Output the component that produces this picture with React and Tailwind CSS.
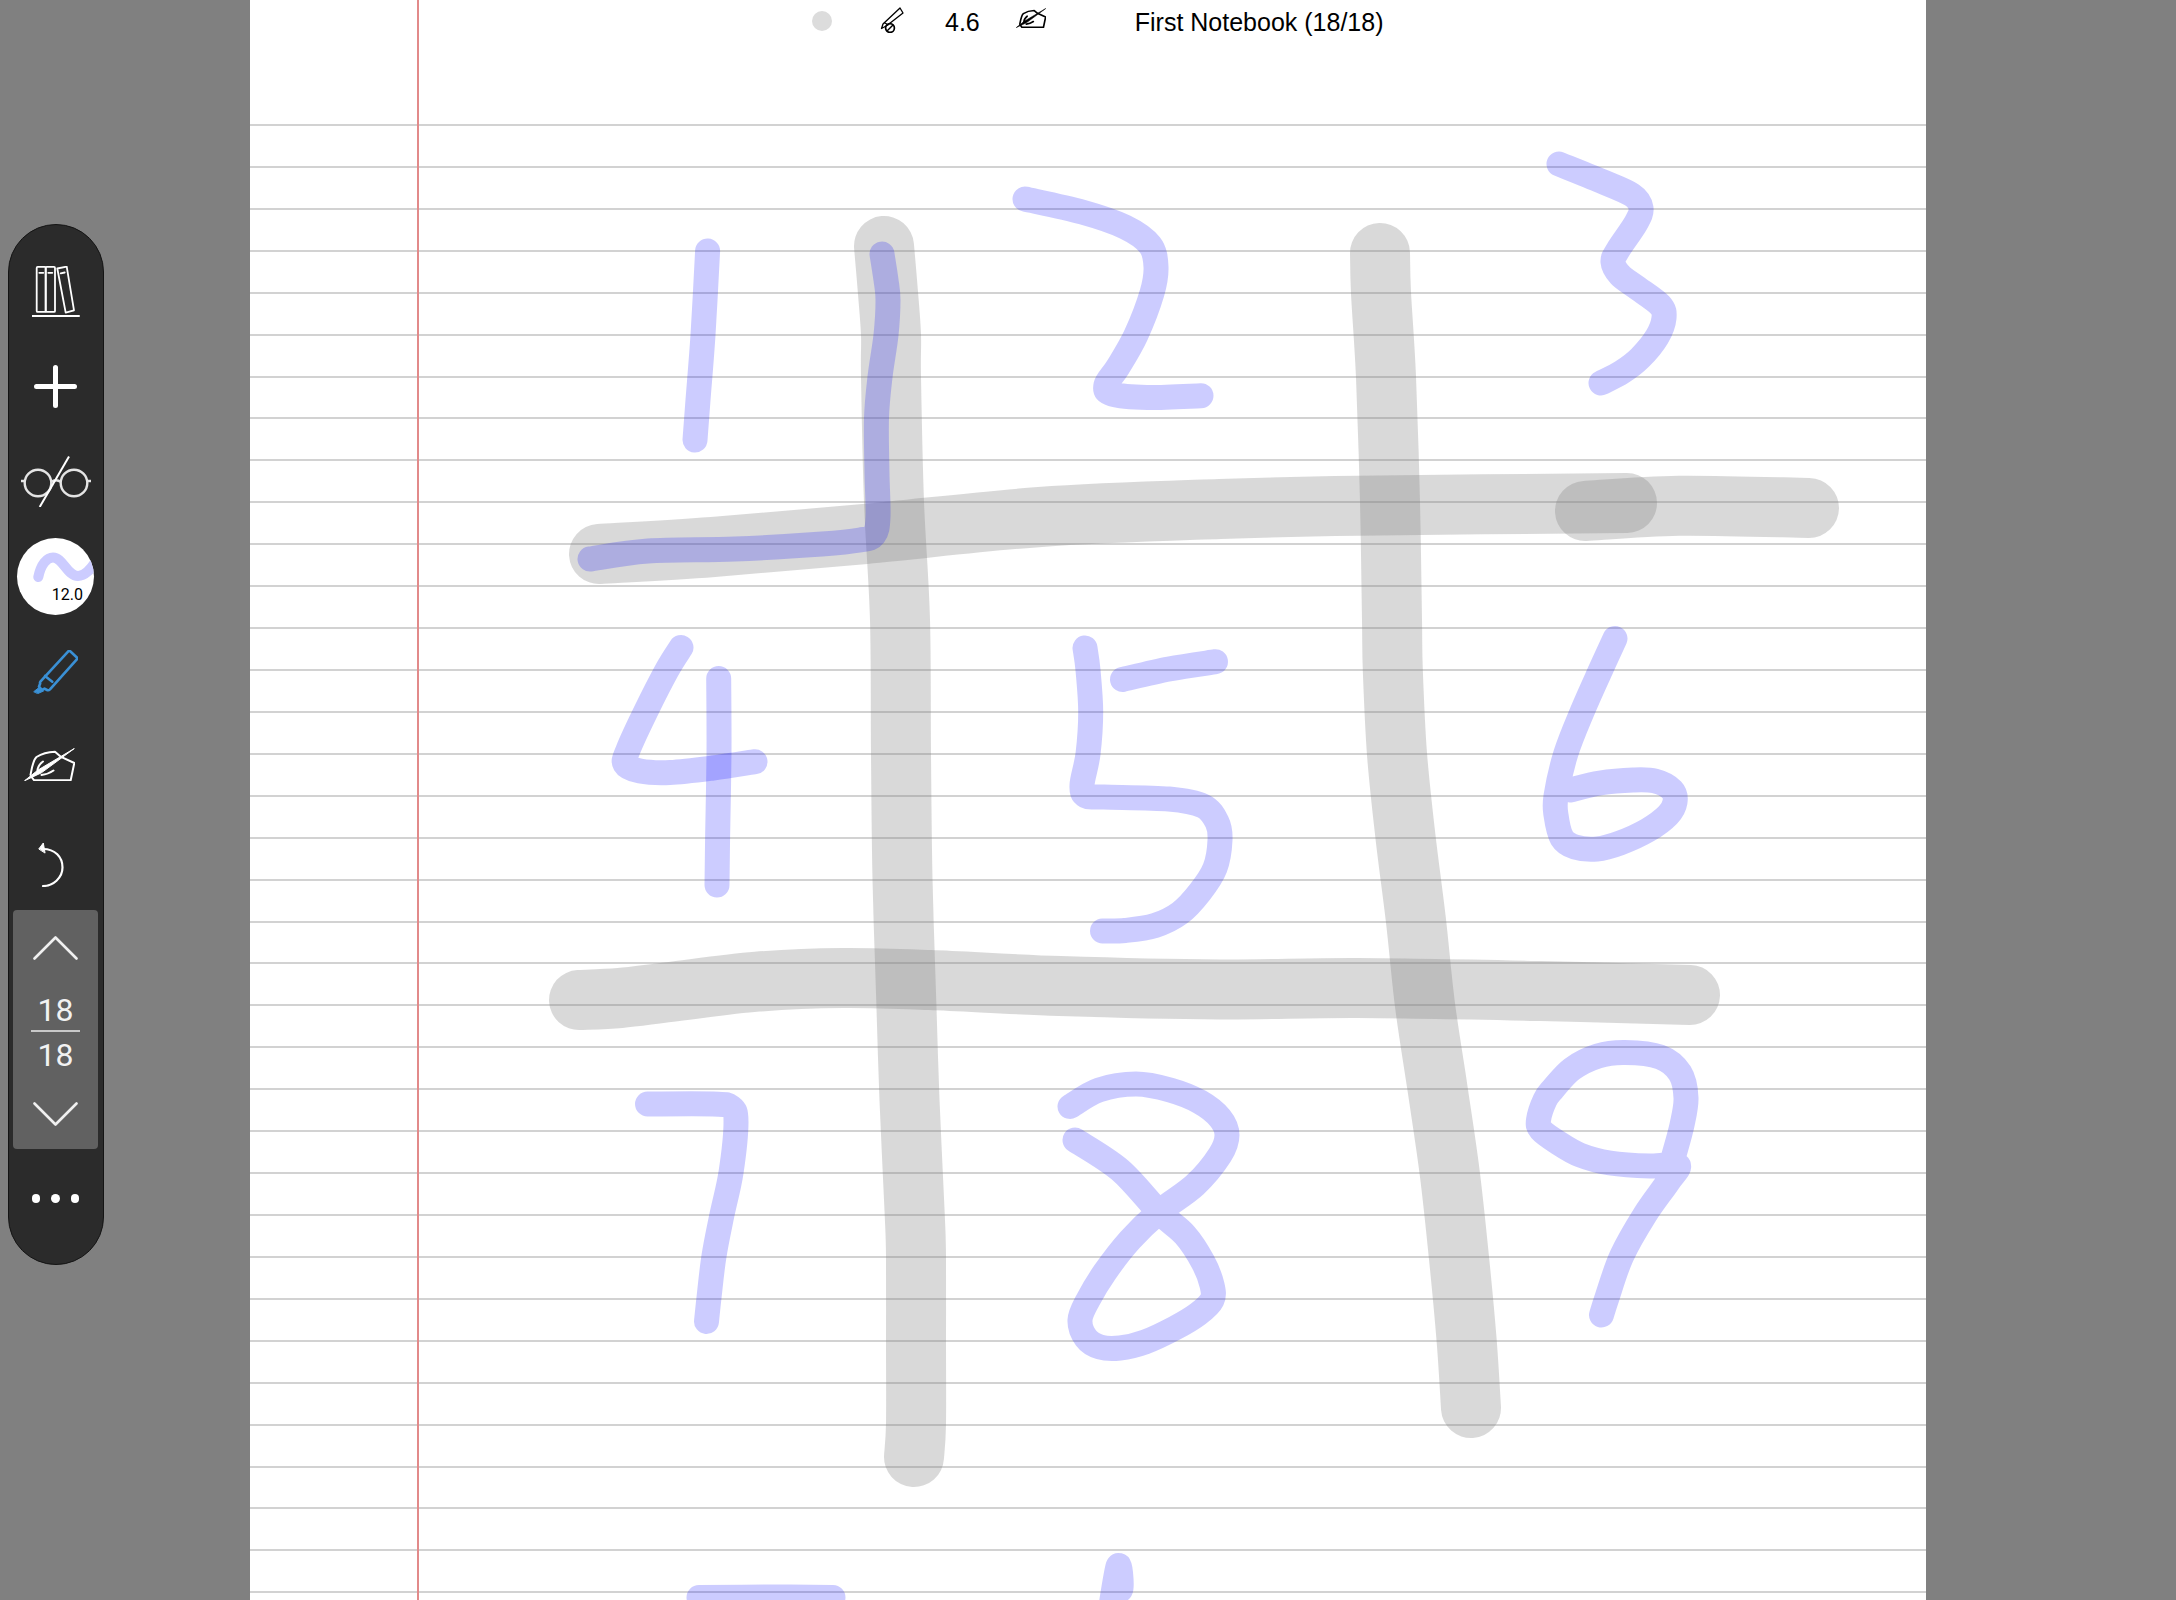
import React from "react";

const highlighterStrokes = [
  [[884, 246], [888, 293], [891, 335], [891, 377], [894, 502], [900, 620], [901, 754], [902.5, 879], [906.4, 1005], [909.5, 1100], [914.7, 1214], [916, 1256], [916, 1340], [916, 1424], [914, 1457]],
  [[1380, 253], [1381, 293], [1386, 377], [1390, 502], [1392, 620], [1392.8, 670], [1397, 754], [1405.5, 837], [1416, 921], [1425, 1005], [1437.6, 1089], [1449.6, 1172], [1458.8, 1256], [1466.6, 1340], [1471, 1408]],
  [[599, 554], [713, 547], [865, 534], [1040, 517], [1220, 509], [1358, 505.7], [1627, 503]],
  [[1585, 511], [1679, 505.7], [1809, 508]],
  [[579, 1000], [620, 998], [670, 992], [757, 981.7], [843, 978], [930, 980], [1060, 986], [1220, 989.5], [1358, 988], [1541, 991], [1690, 995]],
];

const inkStrokes = [
  [[707.6, 251], [703, 335], [698, 400], [695, 440]],
  [[882, 254], [886, 280], [888, 300], [886, 335], [880, 377], [876.5, 418], [877, 473], [878, 517], [874, 535], [860, 540], [822, 544], [735, 549], [648, 551], [590, 559]],
  [[1025, 199], [1082, 212], [1125, 227], [1150, 245], [1156, 267], [1152, 293], [1136, 335], [1118, 367], [1106, 385], [1112, 394], [1147, 397.5], [1201, 395.7]],
  [[1559, 164], [1601, 181], [1632, 195], [1641, 208], [1636, 223], [1618, 250], [1613, 262], [1620, 275], [1636, 287], [1660, 305], [1664, 318], [1657, 337], [1640, 358], [1622, 372], [1601, 383]],
  [[681, 647.5], [667, 670], [645.5, 712], [628, 750], [625, 764], [640, 771], [670, 772.5], [713, 768], [755, 761.7]],
  [[718.7, 678.5], [719, 753], [717.6, 837], [717, 885]],
  [[1085, 648], [1088, 670], [1090.7, 712], [1088, 754], [1082, 785], [1086, 796], [1104, 797], [1169, 799], [1203, 806], [1217, 822], [1220, 840], [1215, 868], [1200, 892], [1180, 913], [1155, 925.5], [1125, 930.5], [1102.5, 931]],
  [[1122.5, 679.5], [1169, 669], [1215.5, 661.7]],
  [[1615, 638.5], [1600.6, 670], [1582, 712], [1565.7, 754], [1556, 796], [1556, 815], [1562, 838], [1575, 847], [1597, 849], [1620, 843], [1648, 830], [1668, 815], [1675, 802], [1672, 790], [1655, 781], [1633, 780], [1600, 783], [1570, 790]],
  [[647.5, 1104], [713, 1104], [731, 1107], [736, 1122], [731, 1172.6], [722, 1214.6], [714, 1256], [709, 1297.6], [706.5, 1321.5]],
  [[1070, 1106.5], [1099, 1090], [1136, 1084], [1170, 1090], [1200, 1102], [1220, 1118], [1227, 1135], [1220, 1155], [1195, 1185], [1159, 1212], [1130, 1240], [1105, 1272], [1088, 1300], [1080, 1320], [1086, 1338], [1100, 1347], [1120, 1348], [1145, 1342], [1175, 1328], [1198, 1314], [1212, 1300], [1212, 1285], [1203, 1262], [1185, 1235], [1159, 1212], [1120, 1170], [1075, 1140]],
  [[1674, 1155], [1682, 1125], [1686, 1098], [1680, 1073], [1660, 1057], [1625, 1052.5], [1598, 1056], [1572, 1069], [1553, 1089], [1545, 1100], [1538.5, 1120], [1541, 1130], [1557, 1142], [1580, 1155], [1610, 1163], [1650, 1166], [1678, 1165], [1668, 1182], [1645, 1214.6], [1621.7, 1256], [1607, 1297.6], [1601.5, 1315]],
  [[699, 1597.5], [770, 1597], [833, 1597.5]],
  [[1108, 1625], [1118, 1566.5], [1121, 1588], [1114, 1592]],
];

function smoothPath(points) {
  let d = `M${points[0][0]} ${points[0][1]}`;
  for (let i = 0; i < points.length - 1; i++) {
    const p0 = points[i - 1] || points[i];
    const p1 = points[i];
    const p2 = points[i + 1];
    const p3 = points[i + 2] || p2;
    const c1x = p1[0] + (p2[0] - p0[0]) / 6;
    const c1y = p1[1] + (p2[1] - p0[1]) / 6;
    const c2x = p2[0] - (p3[0] - p1[0]) / 6;
    const c2y = p2[1] - (p3[1] - p1[1]) / 6;
    d += ` C${c1x} ${c1y} ${c2x} ${c2y} ${p2[0]} ${p2[1]}`;
  }
  return d;
}

function Strokes() {
  return (
    <svg className="absolute top-0 left-0 w-[1676px] h-[1600px]" viewBox="250 0 1676 1600" fill="none" strokeLinecap="round" strokeLinejoin="round">
      {highlighterStrokes.map((points, i) => <path key={i} d={smoothPath(points)} stroke="#808080" strokeOpacity="0.3" strokeWidth="60" />)}
      {inkStrokes.map((points, i) => <path key={i} d={smoothPath(points)} stroke="#0000ff" strokeOpacity="0.2" strokeWidth="25" />)}
    </svg>
  );
}

function BooksIcon() {
  return (
    <svg className="w-[48px] h-[52px]" viewBox="0 0 48 52" fill="none" stroke="white" strokeWidth="1.8" strokeLinejoin="round" strokeLinecap="round">
      <rect x="4.7" y="0.9" width="9" height="45" rx="1" />
      <rect x="13.7" y="0.9" width="9.3" height="45" rx="1" />
      <path d="M25.3 2.5 L34.7 0.6 L42 44.3 L33.7 46.6 Z" />
      <path d="M7.3 6.8 H11.3 M16.3 6.8 H20.3 M28.7 7.4 L32.7 6.5" />
      <path d="M0.5 50 H47" strokeWidth="2" />
    </svg>
  );
}

function PlusIcon() {
  return (
    <svg className="w-[43px] h-[43px]" viewBox="0 0 43 43" fill="none" stroke="white" strokeWidth="5" strokeLinecap="round">
      <path d="M21.5 2.5 V40.5 M2.5 21.5 H40.5" />
    </svg>
  );
}

function GlassesIcon() {
  return (
    <svg className="w-[70px] h-[51px]" viewBox="0 0 70 51" fill="none" stroke="#e4e4e4" strokeWidth="2.4">
      <circle cx="17" cy="27" r="13.3" />
      <circle cx="53" cy="27" r="13.3" />
      <path d="M0 25 H4 M66 25 H70 M30 26 Q35 22.5 40 26" />
      <path d="M48 0.5 L18.7 51" stroke="white" strokeWidth="2" />
    </svg>
  );
}

function HighlighterIcon() {
  return (
    <svg className="w-[45px] h-[44px]" viewBox="0 0 45 44" fill="none" stroke="#3a90d5" strokeWidth="2.6" strokeLinejoin="round" strokeLinecap="round">
      <path d="M35.5 1.2 Q36.5 0.6 37.5 1.5 L43.6 7.2 Q44.6 8.3 43.8 9.4 L17 39.4 Q15.5 40.8 14 40 L11.5 38.6 L9 40 L6 36.6 L7.2 33.6 Q6.6 32.6 7.6 31.4 Z" />
      <path d="M12 26 L19.3 31.7" />
      <path d="M1 41.5 L6 37.5 L10.5 41 L5 43.5 Z" fill="#3a90d5" strokeWidth="1" />
    </svg>
  );
}

function PenHandIcon({className, strokeWidth}) {
  return (
    <svg className={className} viewBox="0 0 51 33" fill="none" stroke="currentColor" strokeWidth={strokeWidth} strokeLinejoin="round" strokeLinecap="round">
      <path d="M6.5 27 C8 19 9 12 12.5 9 C18 5.5 25 4 31 3.8 L36.5 8.6 L50.3 15 L46.7 32.2 H10 L7.5 29" />
      <path d="M50 0.7 L14 22 L0.5 32.8 L17 25 Z" fill="currentColor" strokeWidth="1" />
      <path d="M13.5 23 C13.5 19 15 16.5 19 13.5 M17.5 27 C22 26.5 26 25 29.5 22.5" />
    </svg>
  );
}

function UndoIcon() {
  return (
    <svg className="w-[26px] h-[45px]" viewBox="0 0 26 45" fill="none" stroke="white" strokeWidth="2.2" strokeLinecap="round">
      <path d="M5 7 C17 7 24.5 15 24.5 25.5 C24.5 36 15 44 5 44" />
      <path d="M1 6.7 L5.3 1 L7 10.7 Z" fill="white" strokeWidth="1" strokeLinejoin="round" />
    </svg>
  );
}

function Chevron({down}) {
  return (
    <svg className="w-[45px] h-[24px]" viewBox="0 0 45 24" fill="none" stroke="#f0f0f0" strokeWidth="2.6" strokeLinecap="round" strokeLinejoin="round">
      <path d={down ? "M1.5 1.5 L22.5 22.5 L43.5 1.5" : "M1.5 22.5 L22.5 1.5 L43.5 22.5"} />
    </svg>
  );
}

function PenSlashIcon() {
  return (
    <svg className="w-[25px] h-[26px] ml-[47px]" viewBox="0 0 25 26" fill="none" stroke="black" strokeWidth="1.3" strokeLinejoin="round">
      <path d="M21 1 L24 6 L8 18.5 L2.5 21.5 L4 17 Z" />
      <path d="M5 15.5 L9.5 18" />
      <circle cx="11" cy="21" r="4.4" strokeWidth="1.7" />
      <path d="M8 24 L14 18" strokeWidth="1.4" />
    </svg>
  );
}

function Toolbar() {
  return (
    <div className="w-[96px] h-[1041px] rounded-[48px] border border-[#141414] bg-[#2b2b2b] flex flex-col items-center pt-[41px] pr-[1px]">
      <BooksIcon />
      <div className="mt-[47px]"><PlusIcon /></div>
      <div className="mt-[48px]"><GlassesIcon /></div>
      <div className="relative mt-[31px] w-[77px] h-[77px] rounded-full bg-white overflow-hidden">
        <svg className="w-[77px] h-[77px]" viewBox="0 0 77 77" fill="none">
          <path d="M21.3 39 C24 26 30 19.5 36 19.5 C46 19.5 50 38 61 38 C68 38 73 32 79 23" stroke="#ccccff" strokeWidth="10" strokeLinecap="round" />
        </svg>
        <span className="absolute right-[11px] bottom-[12px] text-[16px] leading-none text-black">12.0</span>
      </div>
      <div className="mt-[35px]"><HighlighterIcon /></div>
      <div className="mt-[54px] -ml-[13px]"><PenHandIcon className="w-[51px] h-[33px] text-white" strokeWidth="2" /></div>
      <div className="mt-[61px] -ml-[10px]"><UndoIcon /></div>
      <div className="mt-[23px] w-[85px] h-[239px] rounded-[4px] bg-[#616161] flex flex-col items-center pt-[26px] text-[32px] leading-[30px] text-[#f2f2f2]">
        <Chevron />
        <span className="mt-[35px]">18</span>
        <div className="mt-[5px] w-[49px] h-[2px] bg-[#c8c8c8]" />
        <span className="mt-[8px]">18</span>
        <div className="mt-[32px]"><Chevron down /></div>
      </div>
      <div className="mt-[45px] flex gap-[11px]">
        <div className="w-[8.5px] h-[8.5px] rounded-full bg-white" />
        <div className="w-[8.5px] h-[8.5px] rounded-full bg-white" />
        <div className="w-[8.5px] h-[8.5px] rounded-full bg-white" />
      </div>
    </div>
  );
}

function Page() {
  const rows = Array.from({length: 36}, (_, i) => i);

  return (
    <div className="relative w-[1676px] h-[1600px] overflow-hidden bg-white">
      <div className="h-[124px]">
        <div className="flex items-center h-[44px] pl-[562px] text-[25px] leading-none text-black font-['Liberation_Sans',sans-serif]">
          <div className="w-[20px] h-[20px] rounded-full bg-[#dcdcdc] -mt-[2px]" />
          <div className="-mt-[4px]"><PenSlashIcon /></div>
          <span className="ml-[41px]">4.6</span>
          <PenHandIcon className="w-[30px] h-[20px] ml-[36px] -mt-[8px] text-black" strokeWidth="2.8" />
          <span className="ml-[89px]">First Notebook (18/18)</span>
        </div>
      </div>
      {rows.map((i) => <div key={i} className="h-[41.93px] border-t-2 border-[#d2d2d2]" />)}
      <div className="absolute top-0 bottom-0 left-[167px] w-[2px] bg-[#e28a8a]" />
      <Strokes />
    </div>
  );
}

export default function App() {
  return (
    <div className="flex w-[2176px] h-[1600px] overflow-hidden bg-[#808080] font-['Roboto',sans-serif]">
      <div className="w-[250px] pt-[224px] pl-[8px]">
        <Toolbar />
      </div>
      <Page />
    </div>
  );
}
